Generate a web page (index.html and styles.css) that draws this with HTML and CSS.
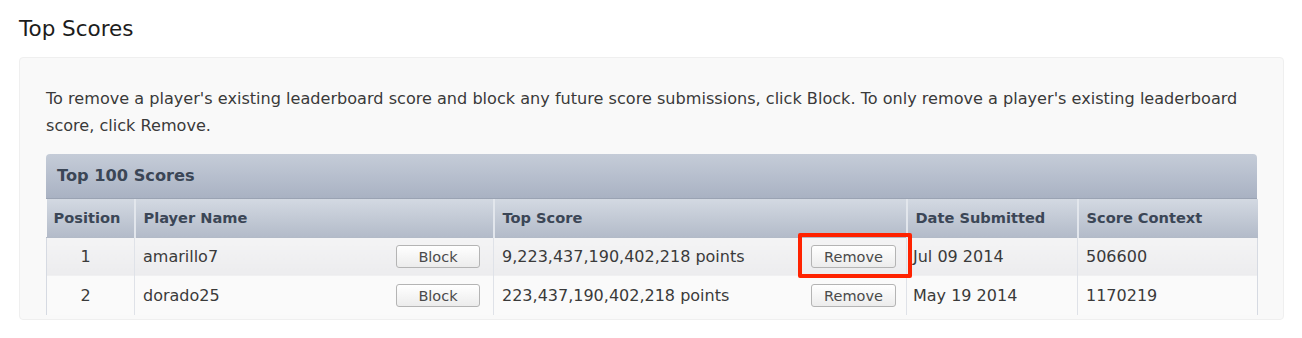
FILE: index.html
```html
<!DOCTYPE html>
<html>
<head>
<meta charset="utf-8">
<link rel="stylesheet" href="styles.css">
</head>
<body>
<h1 class="page-title">Top Scores</h1>
<div class="panel">
  <p class="intro">To remove a player's existing leaderboard score and block any future score submissions, click Block. To only remove a player's existing leaderboard score, click Remove.</p>
  <div class="board">
    <div class="board-title">Top 100 Scores</div>
    <table class="scores">
      <colgroup>
        <col class="c-pos"><col class="c-name"><col class="c-score"><col class="c-date"><col class="c-ctx">
      </colgroup>
      <thead>
        <tr>
          <th>Position</th>
          <th>Player Name</th>
          <th>Top Score</th>
          <th>Date Submitted</th>
          <th>Score Context</th>
        </tr>
      </thead>
      <tbody>
        <tr class="odd">
          <td class="pos">1</td>
          <td><div class="cell-split"><span>amarillo7</span><button class="btn">Block</button></div></td>
          <td><div class="cell-split"><span>9,223,437,190,402,218 points</span><span class="btn-wrap"><button class="btn btn-remove">Remove</button><span class="highlight"></span></span></div></td>
          <td class="date">Jul 09 2014</td>
          <td>506600</td>
        </tr>
        <tr class="even">
          <td class="pos">2</td>
          <td><div class="cell-split"><span>dorado25</span><button class="btn">Block</button></div></td>
          <td><div class="cell-split"><span>223,437,190,402,218 points</span><span class="btn-wrap"><button class="btn btn-remove">Remove</button></span></div></td>
          <td class="date">May 19 2014</td>
          <td>1170219</td>
        </tr>
      </tbody>
    </table>
  </div>
</div>
</body>
</html>
```

FILE: styles.css
```css
* { box-sizing: border-box; }
body {
  margin: 0;
  background: #ffffff;
  font-family: "DejaVu Sans", "Liberation Sans", sans-serif;
  color: #333;
}
.page-title {
  margin: 0;
  padding: 17px 0 0 19px;
  height: 57px;
  font-size: 21.5px;
  font-weight: normal;
  color: #1c1c1c;
  line-height: 24px;
}
.panel {
  margin-left: 19px;
  width: 1265px;
  background: #f9f9f9;
  border: 1px solid #efefef;
  border-radius: 4px;
  padding: 27px 26px 6px 26px;
  height: 263px;
  overflow: hidden;
}
.intro {
  margin: 0 0 15px 0;
  font-size: 16.1px;
  line-height: 27px;
  color: #3a3a3a;
}
.board {
  width: 1211px;
  border-radius: 4px 4px 0 0;
}
.board-title {
  height: 45px;
  padding: 12px 0 0 11px;
  font-size: 16.2px;
  font-weight: bold;
  color: #3b4656;
  background: linear-gradient(#c5ccd8, #a9b2c3);
  border-radius: 4px 4px 0 0;
  border-bottom: 1px solid #9aa3b3;
  line-height: 20px;
}
.scores {
  width: 1211px;
  border-collapse: collapse;
  table-layout: fixed;
}
.c-pos { width: 88px; }
.c-name { width: 359px; }
.c-score { width: 413px; }
.c-date { width: 171px; }
.c-ctx { width: 180px; }
.scores th {
  height: 38px;
  text-align: left;
  padding: 0 8px;
  font-size: 14.6px;
  font-weight: bold;
  color: #3b4656;
  background: linear-gradient(#d3d9e2, #b3bbc9);
  border-left: 2px solid #e2e6ec;
  border-bottom: 1px solid #b2bac7;
}
.scores th:first-child { border-left: none; padding-left: 7px; }
.scores td {
  height: 39px;
  padding: 0 8px;
  font-size: 16px;
  color: #3a3a3a;
  border-left: 1px solid #dfe2e8;
}
.scores td:first-child { border-left: 1px solid #d6dae2; }
.scores td:last-child { border-right: 1px solid #d6dae2; }
.scores td.pos { text-align: center; padding-left: 0; padding-right: 10px; }
.scores td.date { padding-left: 6px; }
.odd td { background: linear-gradient(#f4f4f5, #ececee); }
.even td { background: #fafafa; }
.cell-split {
  display: flex;
  align-items: center;
  justify-content: space-between;
}
.btn {
  font-family: "DejaVu Sans", "Liberation Sans", sans-serif;
  font-size: 14.5px;
  color: #4a4a4a;
  height: 23px;
  width: 84px;
  padding: 0;
  border: 1px solid #b4b4b4;
  border-radius: 3px;
  background: linear-gradient(#ffffff, #ececec);
  margin-right: 5px;
}
.btn-wrap { position: relative; display: flex; margin-right: 2px; }
.btn-remove { width: 85px; margin-right: 0; }
.highlight {
  position: absolute;
  left: -13px;
  top: -12px;
  width: 114px;
  height: 45px;
  border: 4px solid #ff2200;
  border-radius: 2px;
}
```
